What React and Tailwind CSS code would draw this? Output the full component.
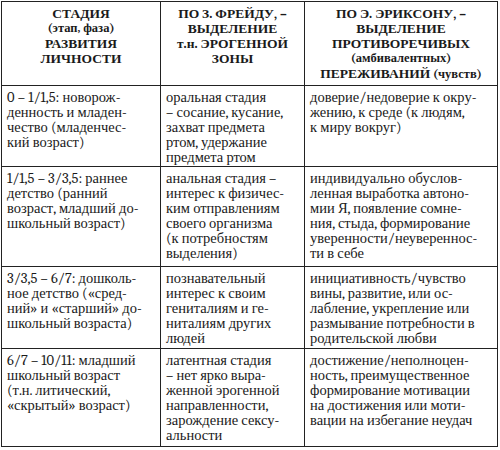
const header = [
  [["СТАДИЯ"], ["(этап, фаза)", true], ["РАЗВИТИЯ"], ["ЛИЧНОСТИ"]],
  [["ПО З. ФРЕЙДУ, –"], ["ВЫДЕЛЕНИЕ"], ["т.н. ЭРОГЕННОЙ"], ["ЗОНЫ"]],
  [
    ["ПО Э. ЭРИКСОНУ, –"],
    ["ВЫДЕЛЕНИЕ"],
    ["ПРОТИВОРЕЧИВЫХ"],
    ["(амбивалентных)", true],
    ["ПЕРЕЖИВАНИЙ", false, "(чувств)"],
  ],
];

const rows = [
  {
    h: "h-[81px]",
    cells: [
      ["0 – 1/1,5: новорож-", "денность и младен-", "чество (младенчес-", "кий возраст)"],
      ["оральная стадия", "– сосание, кусание,", "захват предмета", "ртом, удержание", "предмета ртом"],
      ["доверие/недоверие к окру-", "жению, к среде (к людям,", "к миру вокруг)"],
    ],
  },
  {
    h: "h-[100px]",
    cells: [
      ["1/1,5 – 3/3,5: раннее", "детство (ранний", "возраст, младший до-", "школьный возраст)"],
      ["анальная стадия –", "интерес к физичес-", "ким отправлениям", "своего организма", "(к потребностям", "выделения)"],
      [
        "индивидуально обуслов-",
        "ленная выработка автоно-",
        "мии Я, появление сомне-",
        "ния, стыда, формирование",
        "уверенности/неувереннос-",
        "ти в себе",
      ],
    ],
  },
  {
    h: "h-[82px]",
    cells: [
      ["3/3,5 – 6/7: дошколь-", "ное детство («сред-", "ний» и «старший» до-", "школьный возраста)"],
      ["познавательный", "интерес к своим", "гениталиям и ге-", "ниталиям других", "людей"],
      [
        "инициативность/чувство",
        "вины, развитие, или ос-",
        "лабление, укрепление или",
        "размывание потребности в",
        "родительской любви",
      ],
    ],
  },
  {
    h: "h-[98px]",
    cells: [
      ["6/7 – 10/11: младший", "школьный возраст", "(т.н. литический,", "«скрытый» возраст)"],
      ["латентная стадия", "– нет ярко выра-", "женной эрогенной", "направленности,", "зарождение сексу-", "альности"],
      [
        "достижение/неполноцен-",
        "ность, преимущественное",
        "формирование мотивации",
        "на достижения или моти-",
        "вации на избегание неудач",
      ],
    ],
  },
];

const widths = ["w-[159px]", "w-[144px]", "w-[193px]"];

export default function App() {
  return (
    <div className="w-[500px] h-[450px] overflow-hidden bg-white pl-[1px] pt-[1px] text-[#1a1a1a] font-serif">
      <table className="border-collapse table-fixed w-[497px] font-serif">
        <thead>
          <tr className="h-[84px]">
            {header.map((lines, i) => (
              <th
                key={i}
                className={`${widths[i]} font-serif border border-[#222] align-top pt-[4px] px-1 text-center font-bold text-[13.5px] leading-[15px]`}
              >
                {lines.map(([t, small, extra], j) => (
                  <div key={j} className={`font-serif whitespace-nowrap ${small ? "text-[12.5px]" : ""}`}>
                    {t}
                    {extra && <span className="font-serif text-[12.5px]"> {extra}</span>}
                  </div>
                ))}
              </th>
            ))}
          </tr>
        </thead>
        <tbody>
          {rows.map((row, r) => (
            <tr key={r} className={row.h}>
              {row.cells.map((lines, i) => (
                <td
                  key={i}
                  className="font-serif border border-[#222] align-top pt-[4px] pl-[5px] pr-1 text-[14.5px] leading-[15px]"
                >
                  {lines.map((t, j) => (
                    <div key={j} className="font-serif whitespace-nowrap">
                      {t}
                    </div>
                  ))}
                </td>
              ))}
            </tr>
          ))}
        </tbody>
      </table>
    </div>
  );
}
